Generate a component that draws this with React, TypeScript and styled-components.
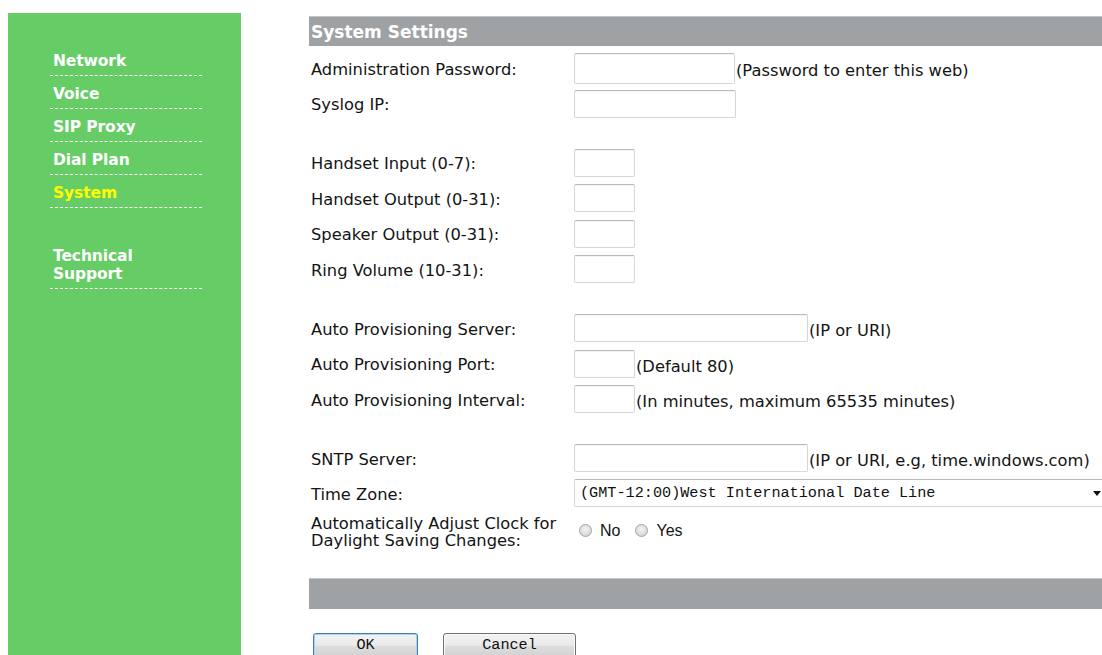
import React from 'react'
import styled, { createGlobalStyle } from 'styled-components'

const GlobalStyle = createGlobalStyle`
  html, body {
    margin: 0;
    padding: 0;
    background: #fff;
    overflow: hidden;
  }
  body {
    font-family: 'DejaVu Sans', Verdana, sans-serif;
    color: #141414;
  }
`

const Page = styled.div`
  display: flex;
  align-items: flex-start;
  padding: 13px 0 0 8px;
  height: 655px;
  box-sizing: border-box;
`

const Sidebar = styled.nav`
  flex: 0 0 233px;
  height: 660px;
  background: #66cc66;
  padding: 33px 0 0 42px;
  box-sizing: border-box;
`

const MenuItem = styled.a<{ $active?: boolean; $gap?: number }>`
  display: block;
  width: 152px;
  box-sizing: border-box;
  margin-top: ${(p) => p.$gap ?? 0}px;
  margin-bottom: 3px;
  padding: 6px 3px 5px;
  border-bottom: 1px dashed #fff;
  font-size: 15.5px;
  line-height: 18px;
  font-weight: bold;
  color: ${(p) => (p.$active ? '#ffff00' : '#fff')};
  text-decoration: none;
  letter-spacing: -0.1px;
`

const Content = styled.main`
  flex: 1;
  margin-left: 68px;
  padding-top: 3px;
  min-width: 0;
`

const Bar = styled.div`
  height: 30px;
  background: #9fa2a4;
  border-top: 1px solid #c3c5c6;
  box-sizing: border-box;
  display: flex;
  align-items: center;
  padding-left: 2px;
  color: #fff;
  font-size: 17px;
  font-weight: bold;
`

const Form = styled.div`
  padding-top: 4px;
`

const Row = styled.div<{ $h?: number }>`
  display: flex;
  align-items: center;
  height: ${(p) => p.$h ?? 35.5}px;
`

const Spacer = styled.div`
  height: 23.5px;
`

const Label = styled.div`
  flex: 0 0 265px;
  padding: 2px 0 0 2px;
  box-sizing: border-box;
  font-size: 16.3px;
  line-height: 17px;
`

const TextBox = styled.input<{ $w: number; $h?: number }>`
  width: ${(p) => p.$w}px;
  height: ${(p) => p.$h ?? 28}px;
  box-sizing: border-box;
  margin: 0;
  padding: 0 4px;
  border: 1px solid #d6d6da;
  border-top-color: #b9b9bd;
  border-radius: 2px;
  box-shadow: inset 0 1px 1px rgba(0, 0, 0, 0.05);
  background: #fff;
  outline: none;
`

const Hint = styled.span`
  font-size: 16.3px;
  padding: 5px 0 0 1px;
  white-space: nowrap;
`

const Select = styled.div`
  width: 534px;
  height: 28px;
  box-sizing: border-box;
  flex-shrink: 0;
  display: flex;
  align-items: center;
  justify-content: space-between;
  padding: 0 6px 0 5px;
  border: 1px solid #d6d6da;
  border-top-color: #b9b9bd;
  border-radius: 2px;
  font-family: 'Liberation Mono', 'DejaVu Sans Mono', monospace;
  font-size: 15.2px;
  color: #111;
  white-space: nowrap;
`

const Caret = styled.span`
  width: 0;
  height: 0;
  border-left: 4px solid transparent;
  border-right: 4px solid transparent;
  border-top: 5px solid #111;
`

const Choices = styled.div`
  display: flex;
  align-items: center;
  padding-left: 5px;
  font-family: 'Liberation Sans', Arial, sans-serif;
  font-size: 16px;
`

const Choice = styled.label`
  display: flex;
  align-items: center;
  gap: 8px;
  margin-right: 15px;
`

const Radio = styled.span`
  width: 13px;
  height: 13px;
  box-sizing: border-box;
  border-radius: 50%;
  border: 1px solid #a4a4a4;
  background: radial-gradient(circle at 50% 40%, #f4f4f4 0%, #dcdcdc 60%, #c8c8c8 100%);
`

const FootBar = styled.div`
  height: 31px;
  margin-top: 26px;
  background: #9fa2a4;
  border-top: 1px solid #c3c5c6;
  box-sizing: border-box;
`

const Actions = styled.div`
  display: flex;
  gap: 25px;
  padding: 24px 0 0 4px;
`

const Button = styled.button<{ $w: number; $default?: boolean }>`
  width: ${(p) => p.$w}px;
  height: 27px;
  padding: 0 0 2px;
  border: 1px solid ${(p) => (p.$default ? '#3c7fb1' : '#707070')};
  border-radius: 3px;
  box-shadow: inset 0 0 0 1px ${(p) => (p.$default ? '#a6d4f3' : '#fbfbfb')};
  background: linear-gradient(#f2f2f2 0%, #ebebeb 45%, #dddddd 50%, #cfcfcf 100%);
  font-family: 'Liberation Mono', 'DejaVu Sans Mono', monospace;
  font-size: 15.2px;
  color: #111;
`

const zones = '(GMT-12:00)West International Date Line'

export default function App() {
  return (
    <>
      <GlobalStyle />
      <Page>
        <Sidebar>
          <MenuItem href="#">Network</MenuItem>
          <MenuItem href="#">Voice</MenuItem>
          <MenuItem href="#">SIP Proxy</MenuItem>
          <MenuItem href="#">Dial Plan</MenuItem>
          <MenuItem href="#" $active>
            System
          </MenuItem>
          <MenuItem href="#" $gap={33}>
            Technical
            <br />
            Support
          </MenuItem>
        </Sidebar>

        <Content>
          <Bar>System Settings</Bar>
          <Form>
            <Row $h={36}>
              <Label>Administration Password:</Label>
              <TextBox type="password" $w={161} $h={31} />
              <Hint>(Password to enter this web)</Hint>
            </Row>
            <Row>
              <Label>Syslog IP:</Label>
              <TextBox $w={162} />
            </Row>
            <Spacer />

            <Row>
              <Label>Handset Input (0-7):</Label>
              <TextBox $w={61} />
            </Row>
            <Row>
              <Label>Handset Output (0-31):</Label>
              <TextBox $w={61} />
            </Row>
            <Row>
              <Label>Speaker Output (0-31):</Label>
              <TextBox $w={61} />
            </Row>
            <Row>
              <Label>Ring Volume (10-31):</Label>
              <TextBox $w={61} />
            </Row>
            <Spacer />

            <Row>
              <Label>Auto Provisioning Server:</Label>
              <TextBox $w={234} />
              <Hint>(IP or URI)</Hint>
            </Row>
            <Row>
              <Label>Auto Provisioning Port:</Label>
              <TextBox $w={61} />
              <Hint>(Default 80)</Hint>
            </Row>
            <Row>
              <Label>Auto Provisioning Interval:</Label>
              <TextBox $w={61} />
              <Hint>(In minutes, maximum 65535 minutes)</Hint>
            </Row>
            <Spacer />

            <Row>
              <Label>SNTP Server:</Label>
              <TextBox $w={234} />
              <Hint>(IP or URI, e.g, time.windows.com)</Hint>
            </Row>
            <Row $h={34}>
              <Label>Time Zone:</Label>
              <Select>
                <span>{zones}</span>
                <Caret />
              </Select>
            </Row>
            <Row $h={41.5}>
              <Label>
                Automatically Adjust Clock for
                <br />
                Daylight Saving Changes:
              </Label>
              <Choices>
                <Choice>
                  <Radio />
                  No
                </Choice>
                <Choice>
                  <Radio />
                  Yes
                </Choice>
              </Choices>
            </Row>
          </Form>
          <FootBar />
          <Actions>
            <Button $w={105} $default>
              OK
            </Button>
            <Button $w={133}>Cancel</Button>
          </Actions>
        </Content>
      </Page>
    </>
  )
}
